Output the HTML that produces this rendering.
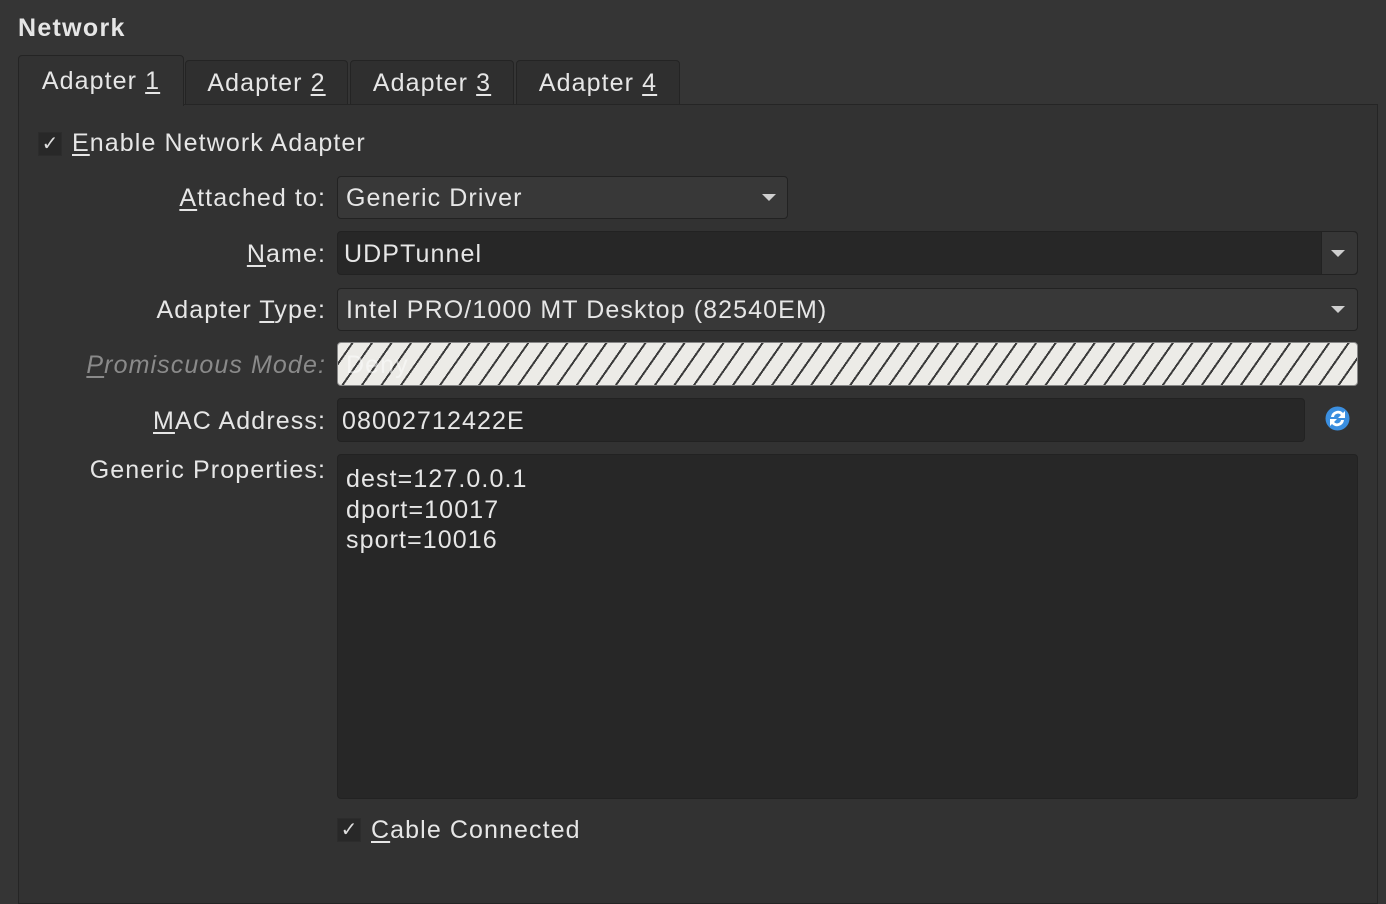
<!DOCTYPE html>
<html><head><meta charset="utf-8"><style>
*{margin:0;padding:0;box-sizing:border-box}
body{width:1386px;height:866px;background:#353535;font-family:"Liberation Sans",sans-serif;font-size:25px;letter-spacing:1.1px;color:#e6e6e6;position:relative;overflow:hidden}
.a{position:absolute;white-space:nowrap}
.lbl{position:absolute;right:1060px;text-align:right;white-space:nowrap;line-height:28px}
u{text-decoration:underline;text-underline-offset:3px}
.tab{position:absolute;border:1px solid #242424;border-bottom:none;border-radius:4px 4px 0 0;background:#2f2f2f;text-align:center;line-height:44px}
.box{position:absolute;border:1px solid #222;border-radius:4px}
.chk{position:absolute;width:24px;height:24px;background:#282828;border:1px solid #2c2c2c;font-size:20px;letter-spacing:0;line-height:22px;text-align:center;color:#ddd}
.arr{position:absolute;width:0;height:0;border-left:7px solid transparent;border-right:7px solid transparent;border-top:7px solid #cfcfcf}
</style></head><body>
<div class="a" style="left:18px;top:14px;font-weight:bold;font-size:25px;letter-spacing:1.3px">Network</div>
<div class="a" style="left:18px;top:104px;width:1360px;height:800px;border:1px solid #252525;background:#323232"></div>
<div class="tab" style="left:185px;top:60px;width:163px;height:44px">Adapter <u>2</u></div>
<div class="tab" style="left:350px;top:60px;width:164px;height:44px">Adapter <u>3</u></div>
<div class="tab" style="left:516px;top:60px;width:164px;height:44px">Adapter <u>4</u></div>
<div class="tab" style="left:18px;top:55px;width:166px;height:51px;background:#323232;line-height:50px">Adapter <u>1</u></div>

<div class="chk" style="left:38px;top:132px">✓</div>
<div class="a" style="left:72px;top:129px;line-height:28px"><u>E</u>nable Network Adapter</div>

<div class="lbl" style="top:184px"><u>A</u>ttached to:</div>
<div class="box" style="left:337px;top:176px;width:451px;height:43px;background:#383838"></div>
<div class="a" style="left:346px;top:184px;line-height:28px">Generic Driver</div>
<div class="arr" style="left:762px;top:194px"></div>

<div class="lbl" style="top:240px"><u>N</u>ame:</div>
<div class="box" style="left:337px;top:231px;width:1021px;height:44px;background:#272727"></div>
<div class="a" style="left:1321px;top:232px;width:36px;height:42px;background:#363636;border-left:1px solid #222;border-radius:0 4px 4px 0"></div>
<div class="a" style="left:344px;top:240px;line-height:28px">UDPTunnel</div>
<div class="arr" style="left:1331px;top:250px"></div>

<div class="lbl" style="top:296px">Adapter <u>T</u>ype:</div>
<div class="box" style="left:337px;top:288px;width:1021px;height:43px;background:#383838"></div>
<div class="a" style="left:346px;top:296px;line-height:28px">Intel PRO/1000 MT Desktop (82540EM)</div>
<div class="arr" style="left:1331px;top:306px"></div>

<div class="lbl" style="top:351px;color:#8a8a8a;font-style:italic"><u>P</u>romiscuous Mode:</div>
<div class="box" style="left:337px;top:342px;width:1021px;height:44px;border-color:#888;background:repeating-linear-gradient(-55deg,#ecebe7 0 14px,#3a3a3a 14px 16px)"></div>
<div class="a" style="left:346px;top:351px;line-height:28px;color:#fff;opacity:.5">Deny</div>

<div class="lbl" style="top:407px"><u>M</u>AC Address:</div>
<div class="box" style="left:337px;top:398px;width:968px;height:44px;background:#272727"></div>
<div class="a" style="left:342px;top:407px;line-height:28px">08002712422E</div>
<svg class="a" style="left:1324px;top:405px" width="27" height="27" viewBox="0 0 27 27"><circle cx="13.5" cy="13.5" r="12" fill="#3b8fe0"/><path d="M7 12a7 7 0 0 1 12-4l2-2v7h-7l3-3a4 4 0 0 0-7 2z M20 15a7 7 0 0 1-12 4l-2 2v-7h7l-3 3a4 4 0 0 0 7-2z" fill="#fff"/></svg>

<div class="lbl" style="top:456px">Generic Properties:</div>
<div class="box" style="left:337px;top:454px;width:1021px;height:345px;background:#272727"></div>
<div class="a" style="left:346px;top:464px;line-height:30.5px">dest=127.0.0.1<br>dport=10017<br>sport=10016</div>

<div class="chk" style="left:337px;top:818px">✓</div>
<div class="a" style="left:371px;top:816px;line-height:28px"><u>C</u>able Connected</div>
</body></html>
